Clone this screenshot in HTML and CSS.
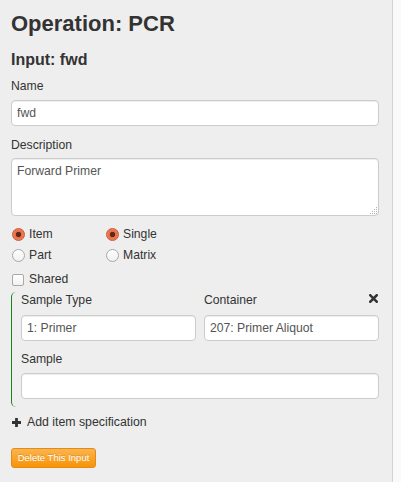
FILE: index.html
```html
<!DOCTYPE html>
<html>
<head>
<meta charset="utf-8">
<link rel="stylesheet" href="styles.css">
</head>
<body>
<div class="panel">
  <h2 class="title">Operation: PCR</h2>
  <h3 class="subtitle">Input: fwd</h3>
  <label class="lbl lbl-name">Name</label>
  <input class="field" type="text" value="fwd">
  <label class="lbl lbl-desc">Description</label>
  <div class="area-wrap">
    <textarea class="area">Forward Primer</textarea>
    <svg class="grip" width="7" height="7" viewBox="0 0 7 7">
      <g fill="#b3b3b3">
        <rect x="6" y="0" width="1" height="1"/>
        <rect x="4" y="2" width="1" height="1"/><rect x="6" y="2" width="1" height="1"/>
        <rect x="2" y="4" width="1" height="1"/><rect x="4" y="4" width="1" height="1"/><rect x="6" y="4" width="1" height="1"/>
        <rect x="0" y="6" width="1" height="1"/><rect x="2" y="6" width="1" height="1"/><rect x="4" y="6" width="1" height="1"/><rect x="6" y="6" width="1" height="1"/>
      </g>
    </svg>
  </div>
  <div class="choices">
    <label class="opt"><input class="radio" type="radio" name="kind" checked><span>Item</span></label>
    <label class="opt"><input class="radio" type="radio" name="mult" checked><span>Single</span></label>
    <label class="opt"><input class="radio" type="radio" name="kind"><span>Part</span></label>
    <label class="opt"><input class="radio" type="radio" name="mult"><span>Matrix</span></label>
  </div>
  <label class="opt shared"><input class="check" type="checkbox"><span>Shared</span></label>
  <div class="spec">
    <div class="spec-col">
      <label class="lbl">Sample Type</label>
      <input class="field" type="text" value="1: Primer">
    </div>
    <div class="spec-col">
      <div class="lbl-row">
        <label class="lbl">Container</label>
        <svg class="close" width="9" height="9" viewBox="0 0 9 9"><path d="M1.3 1.3 L7.7 7.7 M7.7 1.3 L1.3 7.7" stroke="#333" stroke-width="2.6" stroke-linecap="square"/></svg>
      </div>
      <input class="field" type="text" value="207: Primer Aliquot">
    </div>
    <div class="spec-wide">
      <label class="lbl">Sample</label>
      <input class="field" type="text" value="">
    </div>
  </div>
  <a class="add"><svg class="plus" width="9" height="9" viewBox="0 0 9 9"><path d="M4.5 0 V9 M0 4.5 H9" stroke="#333" stroke-width="2.8"/></svg><span>Add item specification</span></a>
  <button class="btn-warn" type="button">Delete This Input</button>
</div>
</body>
</html>
```

FILE: styles.css
```css
html {
  background: #fafafa;
}
body {
  margin: 0;
  font-family: "Liberation Sans", Arial, sans-serif;
  font-size: 12px;
  color: #333;
}
.panel {
  box-sizing: border-box;
  width: 393px;
  min-height: 482px;
  background: #eeeeee;
  border-right: 1px solid #d2d2d2;
  padding: 10px 13px 0 11px;
  display: flex;
  flex-direction: column;
  align-items: stretch;
}
.title {
  margin: 0;
  font-size: 22px;
  line-height: 27px;
  font-weight: bold;
  color: #333;
}
.subtitle {
  margin: 13px 0 0;
  font-size: 16px;
  line-height: 19px;
  font-weight: bold;
  color: #333;
}
.lbl {
  display: block;
  font-size: 12.2px;
  line-height: 16px;
  color: #333;
}
.lbl-name {
  margin-top: 9px;
}
.lbl-desc {
  margin-top: 11px;
}
.field {
  display: block;
  box-sizing: border-box;
  width: 100%;
  height: 26px;
  margin: 6px 0 0;
  padding: 4px 5px;
  border: 1px solid #ccc;
  border-radius: 4px;
  background: #fff;
  box-shadow: inset 0 1px 1px rgba(0, 0, 0, 0.075);
  font-family: "Liberation Sans", Arial, sans-serif;
  font-size: 12.2px;
  line-height: 16px;
  color: #555;
  outline: none;
}
.area-wrap {
  position: relative;
  margin-top: 5px;
}
.area {
  display: block;
  box-sizing: border-box;
  width: 100%;
  height: 58px;
  margin: 0;
  padding: 4px 5px;
  border: 1px solid #ccc;
  border-radius: 4px;
  background: #fff;
  box-shadow: inset 0 1px 1px rgba(0, 0, 0, 0.075);
  font-family: "Liberation Sans", Arial, sans-serif;
  font-size: 12.2px;
  line-height: 16px;
  color: #555;
  resize: none;
  outline: none;
}
.grip {
  position: absolute;
  right: 2px;
  bottom: 2px;
  display: block;
}
.choices {
  margin-top: 8px;
  display: grid;
  grid-template-columns: 94px 94px;
  grid-auto-rows: 21px;
}
.opt {
  display: flex;
  align-items: center;
  gap: 5px;
  height: 21px;
  padding-left: 1px;
  font-size: 12.2px;
  line-height: 21px;
  color: #333;
}
.radio {
  appearance: none;
  -webkit-appearance: none;
  box-sizing: border-box;
  width: 13px;
  height: 13px;
  margin: 0 -1px 0 0;
  border: 1px solid #a9a9a9;
  border-radius: 50%;
  background: linear-gradient(#ffffff, #f0f0f0);
  flex: none;
}
.radio:checked {
  border-color: #c8563a;
  background: radial-gradient(circle, #5b2a1c 0, #5b2a1c 2.3px, #e96c43 3px, #f2916a 100%);
}
.check {
  appearance: none;
  -webkit-appearance: none;
  box-sizing: border-box;
  width: 12px;
  height: 12px;
  margin: 0;
  border: 1px solid #a9a9a9;
  border-radius: 2px;
  background: linear-gradient(#ffffff, #f1f1f1);
  flex: none;
}
.shared {
  margin-top: 3px;
}
.spec {
  margin-top: 2px;
  border-left: 1px solid #1a861a;
  border-radius: 5px 0 0 5px;
  padding: 0 0 8px 9px;
  display: grid;
  grid-template-columns: 1fr 1fr;
  column-gap: 8px;
}
.spec-col .field {
  margin-top: 7px;
}
.lbl-row {
  display: flex;
  justify-content: space-between;
  align-items: flex-start;
}
.close {
  display: block;
  margin-top: 2px;
  margin-right: 1px;
}
.spec-wide {
  grid-column: 1 / 3;
  margin-top: 10px;
}
.add {
  margin-top: 7px;
  display: flex;
  align-items: center;
  gap: 6px;
  font-size: 12.3px;
  line-height: 16px;
  color: #333;
  cursor: pointer;
}
.plus {
  display: block;
  flex: none;
  margin-left: 1px;
  margin-top: 1px;
}
.btn-warn {
  align-self: flex-start;
  margin-top: 18px;
  box-sizing: border-box;
  height: 20px;
  width: 85px;
  padding: 0;
  border: 1px solid #e48b14;
  border-radius: 3px;
  background: linear-gradient(#fbb450, #f89406);
  color: #fff;
  text-shadow: 0 -1px 0 rgba(0, 0, 0, 0.15);
  font-family: "Liberation Sans", Arial, sans-serif;
  font-size: 9.5px;
  line-height: 18px;
  text-align: center;
}
```
